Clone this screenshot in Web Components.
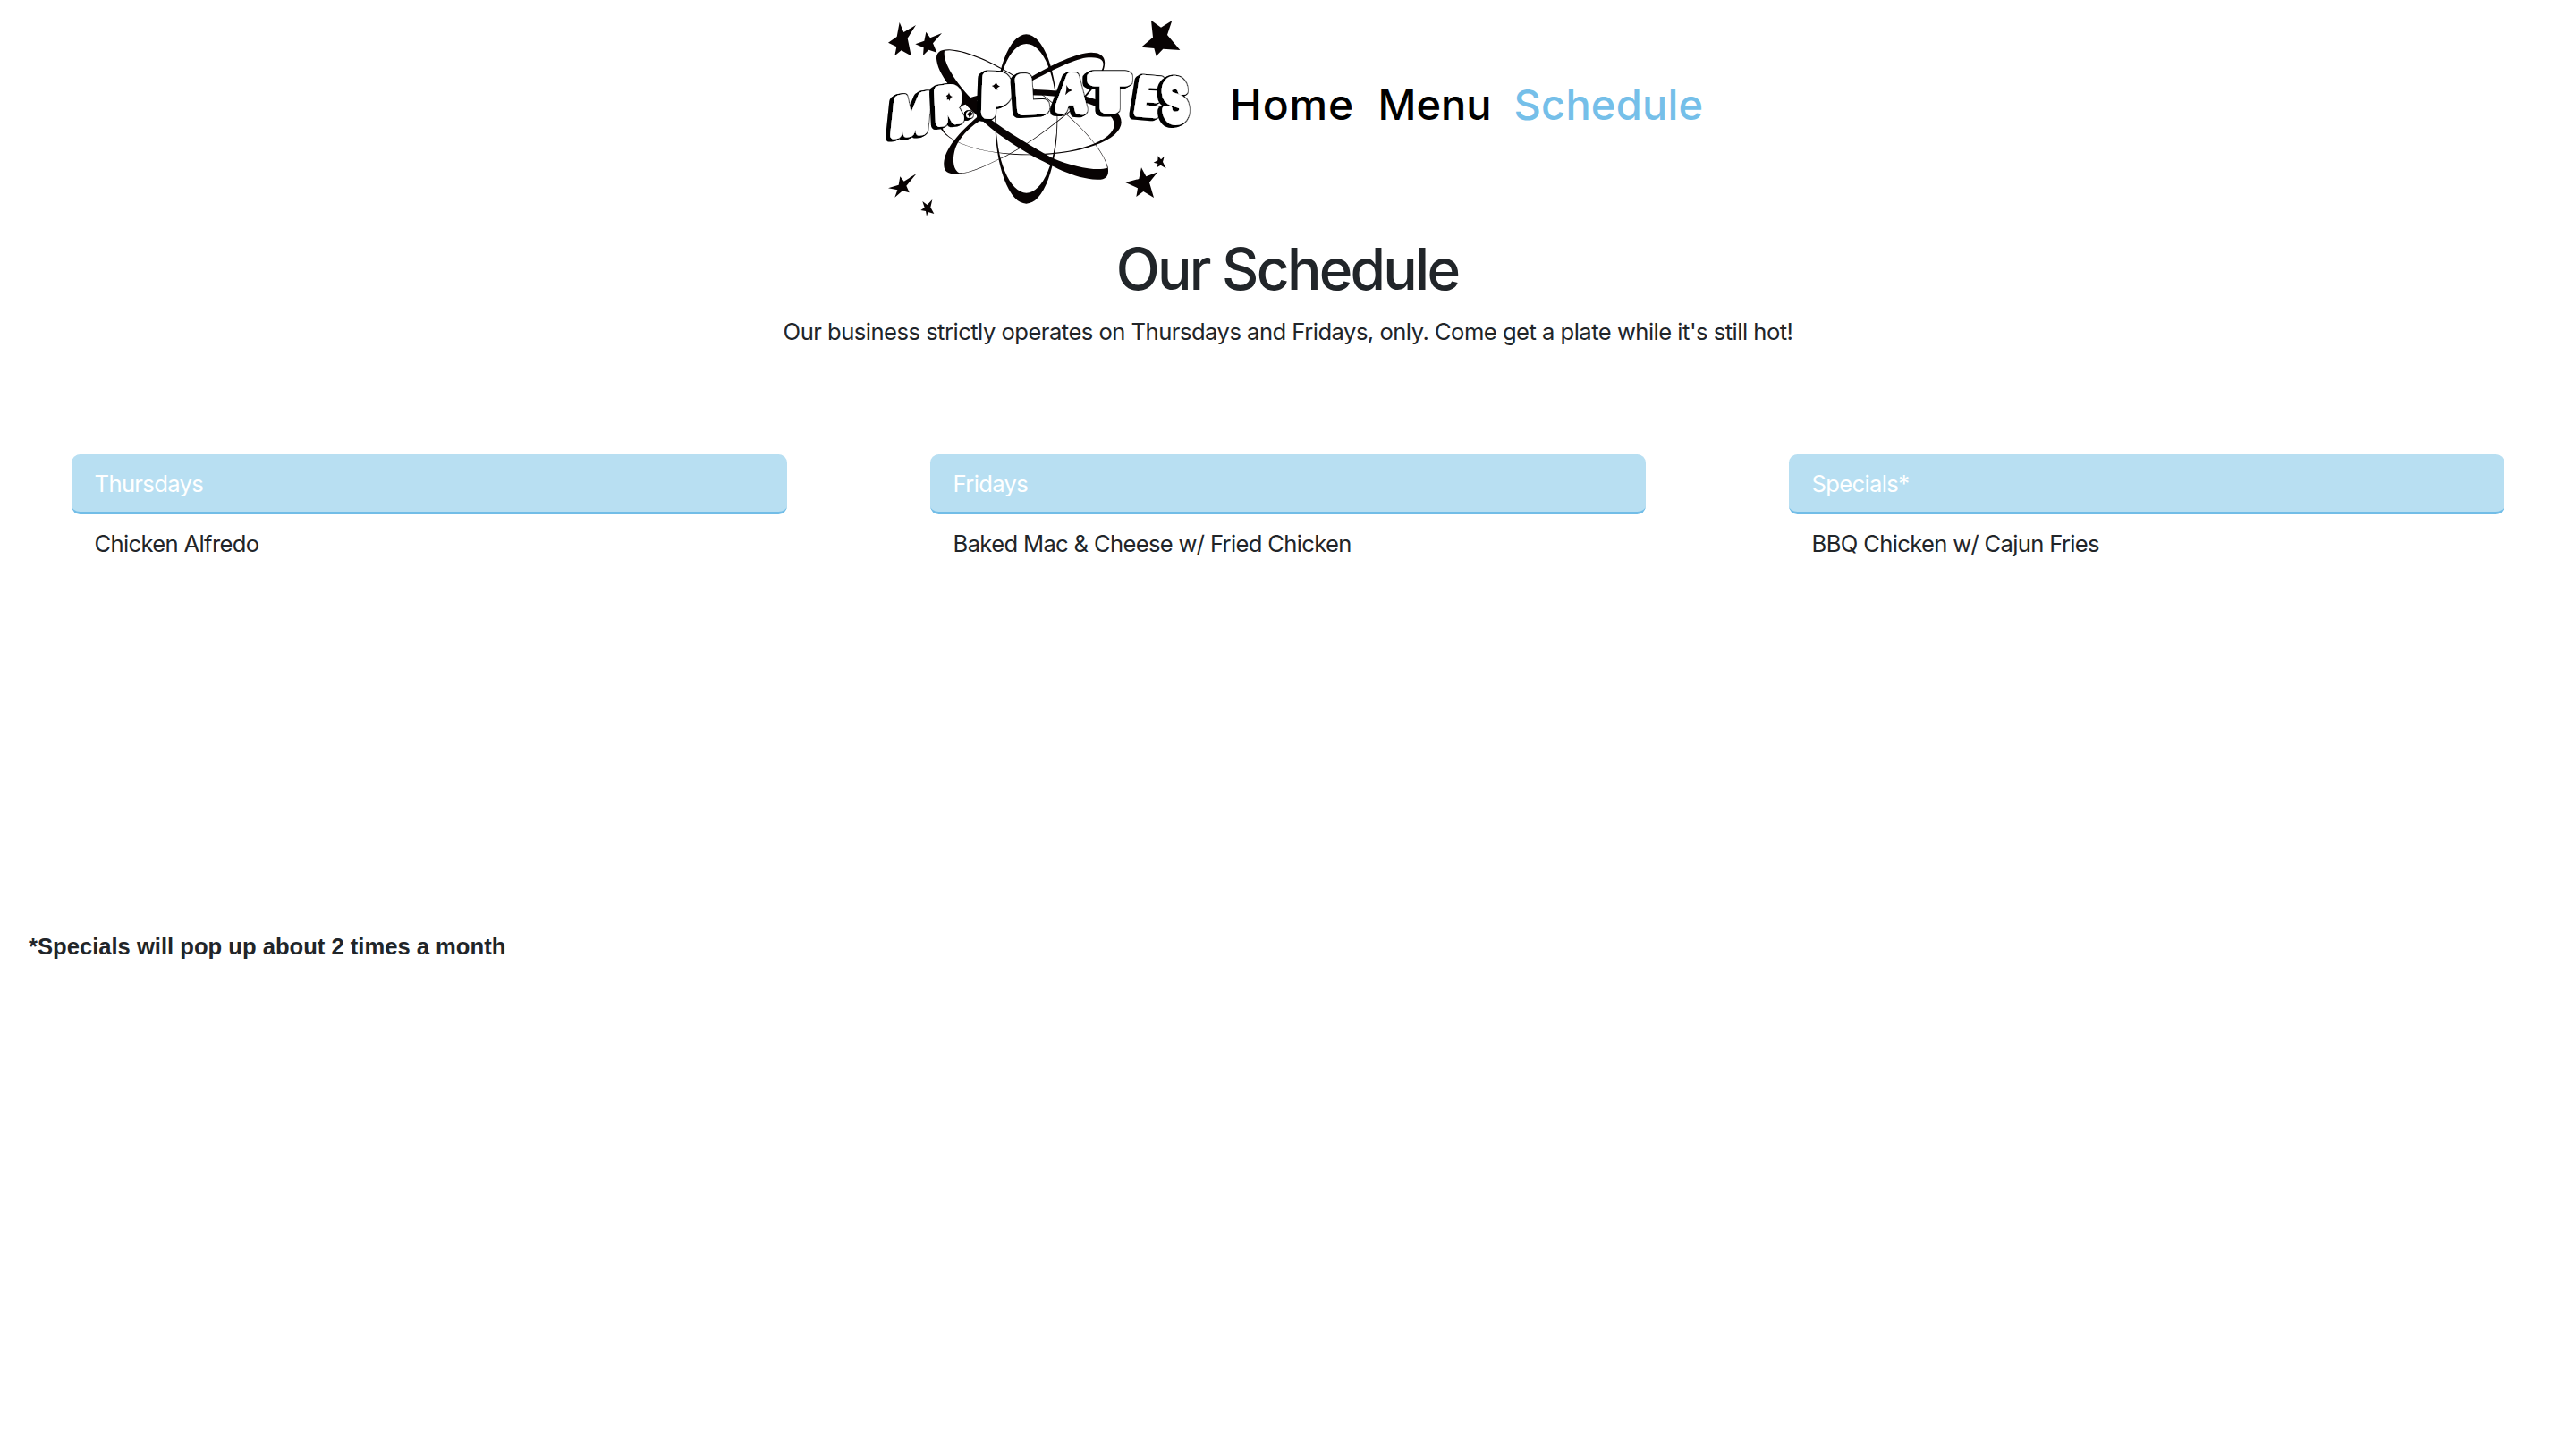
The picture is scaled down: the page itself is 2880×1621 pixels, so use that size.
<!DOCTYPE html>
<html lang="en">
<head>
<meta charset="utf-8">
<title>Mr. Plates</title>
<style>
body{margin:0;background:#fff;color:#212529;font:400 25.6px/38.4px Inter,sans-serif}
</style>
</head>
<body>
<plates-page></plates-page>
<script>
class PlatesLogo extends HTMLElement{
  constructor(){
    super();
    // glyph, x, baseline, rotation, skew, scale x, scale y, weight, outline width
    const letters=[
      ['M',139,413,-8,-14,1.36,1.54,400,21],['R',272,374,-9,-6,1.27,1.42,400,24],['.',342,360,0,0,.7,.7,600,18],
      ['P',430,348,2,0,1.34,1.6,400,27],['L',552,336,-4,0,1.55,1.4,400,27],['A',682,335,3,0,1.25,1.44,400,24],
      ['T',812,334,0,0,1.85,1.45,400,27],['E',934,350,5,-4,1.36,1.56,400,18],['S',1036,372,-4,0,1.32,1.8,400,17]];
    this.attachShadow({mode:'open'}).innerHTML=`
    <style>
      :host{display:block;width:380px;height:240px}
      svg{display:block;width:100%;height:100%}
      text{font-family:Inter,sans-serif;font-size:100px;text-anchor:middle;fill:#fff;stroke:#fff;stroke-linejoin:round}
    </style>
    <svg viewBox="0 0 1140 720" fill="#080303">
      <defs><filter id="bubble" x="-30%" y="-30%" width="160%" height="160%">
        <feMorphology in="SourceAlpha" operator="dilate" radius="3" result="o"/>
        <feComponentTransfer in="o" result="line"><feFuncA type="linear" slope=".6"/></feComponentTransfer>
        <feOffset in="o" dx="-3" dy="1" result="a"/><feOffset in="o" dx="-7" dy="3" result="b"/>
        <feOffset in="o" dx="-11" dy="5" result="c"/>
        <feMerge result="m"><feMergeNode in="line"/><feMergeNode in="a"/><feMergeNode in="b"/><feMergeNode in="c"/></feMerge>
        <feMerge><feMergeNode in="m"/><feMergeNode in="SourceGraphic"/></feMerge>
      </filter></defs>
      <g fill-rule="evenodd">
        <path d="M427 369A105 284 0 1 1 637 369A105 284 0 1 1 427 369ZM430 367A102.500 250 0 1 0 635 367A102.500 250 0 1 0 430 367Z"/>
        <path d="M239 380A306 110 0 1 1 851 380A306 110 0 1 1 239 380ZM249 388A289 99.500 0 1 0 827 388A289 99.500 0 1 0 249 388Z"/>
        <path d="M232 175C226 145 245 135 275 136C340 140 420 180 490 222C560 262 640 330 665 350C720 400 790 470 806 530C812 565 795 573 770 572C690 570 610 520 560 497C480 450 420 410 375 365C310 305 240 230 232 175ZM258 140C250 180 300 250 345 298C375 300 385 340 402 362C470 415 560 465 620 500C690 530 770 545 804 533C795 480 720 400 663 352C638 330 560 264 489 225C420 184 340 144 275 139Z"/>
        <path d="M256 525C254 480 290 430 370 360C430 310 500 255 545 230C620 185 700 148 750 146C800 146 802 180 788 213C760 270 720 310 690 335C600 410 510 475 440 505C380 535 340 552 300 554C268 554 257 545 256 525ZM307 550C280 535 285 480 302 450C320 420 350 390 385 370C440 320 500 272 545 245C620 205 700 165 740 163C780 160 796 172 789 195C785 213 755 270 688 333C600 408 510 473 440 503C380 533 340 550 307 550Z"/>
      </g>
      ${letters.map(([c,x,y,r,k,sx,sy,w,s])=>`<g filter="url(#bubble)"><text font-weight="${w}" stroke-width="${s}" transform="translate(${x} ${y}) rotate(${r}) skewX(${k}) scale(${sx} ${sy})">${c}</text></g>`).join('')}
      <path d="M431 244Q433 257 444 260Q433 262 430 275Q427 262 416 258Q428 257 431 244ZM273 280Q275 292 285 294Q275 298 276 309Q270 298 263 291Q271 290 273 280ZM344 340Q347 350 356 352Q346 355 342 366Q340 356 332 353Q341 350 344 340ZM667 255Q672 268 687 273Q674 276 663 289Q668 272 667 255Z"/>
      <g>
        <polygon points="107,45 121,78 162,54 134,98 146,157 113,139 91,157 97,127 69,113 98,93"/>
        <polygon points="196,77 210,97 249,81 219,115 232,146 205,137 186,156 188,130 160,118 190,107"/>
        <polygon points="951,38 984,62 1021,39 1005,87 1048,138 991,134 968,158 961,132 918,128 957,95"/>
        <polygon points="109,562 122,578 164,552 130,593 140,616 117,610 91,632 100,607 69,601 104,590"/>
        <polygon points="184,645 200,657 217,639 211,665 223,687 203,681 198,695 195,678 178,675 191,666"/>
        <polygon points="918,532 934,562 973,547 945,582 960,633 925,612 901,630 906,601 865,582 910,570"/>
        <polygon points="974,493 984,505 995,494 990,513 1001,535 983,524 971,531 973,519 959,515 973,508"/>
      </g>
    </svg>`;
  }
}
customElements.define('plates-logo',PlatesLogo);

class PlatesNav extends HTMLElement{
  constructor(){
    super();
    this.attachShadow({mode:'open'}).innerHTML=`
    <style>
      :host{display:block;padding-left:25px}
      nav{display:grid;grid-template-columns:165.5px 152px auto;align-items:baseline;font:500 47px/72px Inter,sans-serif}
      ::slotted(a){color:#000;text-decoration:none;white-space:nowrap}
      ::slotted(a:first-child){font-size:48px;letter-spacing:.9px}
      ::slotted(a[aria-current]){color:#75bfe9;letter-spacing:.2px}
    </style><nav><slot></slot></nav>`;
  }
}
customElements.define('plates-nav',PlatesNav);

class DayMenu extends HTMLElement{
  constructor(){
    super();
    this.attachShadow({mode:'open'}).innerHTML=`
    <style>
      :host{display:block;height:320px;letter-spacing:-.67px}
      .day{background:#b8dff2;color:#fff;padding:13.6px 25.6px 12px;border-bottom:3px solid #72bde7;border-radius:9.6px}
      .dish{padding:13.6px 25.6px 12px}
    </style>
    <div class="day"><slot name="day"></slot></div><div class="dish"><slot></slot></div>`;
  }
}
customElements.define('day-menu',DayMenu);

class PlatesPage extends HTMLElement{
  constructor(){
    super();
    this.attachShadow({mode:'open'}).innerHTML=`
    <style>
      :host{display:block;min-height:1621px}
      header{display:grid;grid-template-columns:380px 560px;justify-content:center;align-items:center;padding:10px 0 13px}
      plates-nav{margin-top:-27px}
      h1{margin:0 0 11.8px;text-align:center;font-size:64px;line-height:76.8px;font-weight:500;letter-spacing:-2.75px;text-indent:-2px}
      .intro{margin:0;text-align:center;letter-spacing:-.52px}
      .days{display:grid;grid-template-columns:repeat(3,1fr);gap:160px;padding:118px 80px 0}
      .note{margin:211px 0 0 32px;font-family:"Liberation Sans",Arial,sans-serif;font-weight:700}
    </style>
    <header><plates-logo></plates-logo>
      <plates-nav><a>Home</a><a>Menu</a><a aria-current="page">Schedule</a></plates-nav></header>
    <main>
      <h1>Our Schedule</h1>
      <p class="intro">Our business strictly operates on Thursdays and Fridays, only. Come get a plate while it's still hot!</p>
      <section class="days">
        <day-menu><span slot="day">Thursdays</span>Chicken Alfredo</day-menu>
        <day-menu><span slot="day">Fridays</span>Baked Mac &amp; Cheese w/ Fried Chicken</day-menu>
        <day-menu><span slot="day">Specials*</span>BBQ Chicken w/ Cajun Fries</day-menu>
      </section>
      <p class="note">*Specials will pop up about 2 times a month</p>
    </main>`;
  }
}
customElements.define('plates-page',PlatesPage);
</script>
</body>
</html>
